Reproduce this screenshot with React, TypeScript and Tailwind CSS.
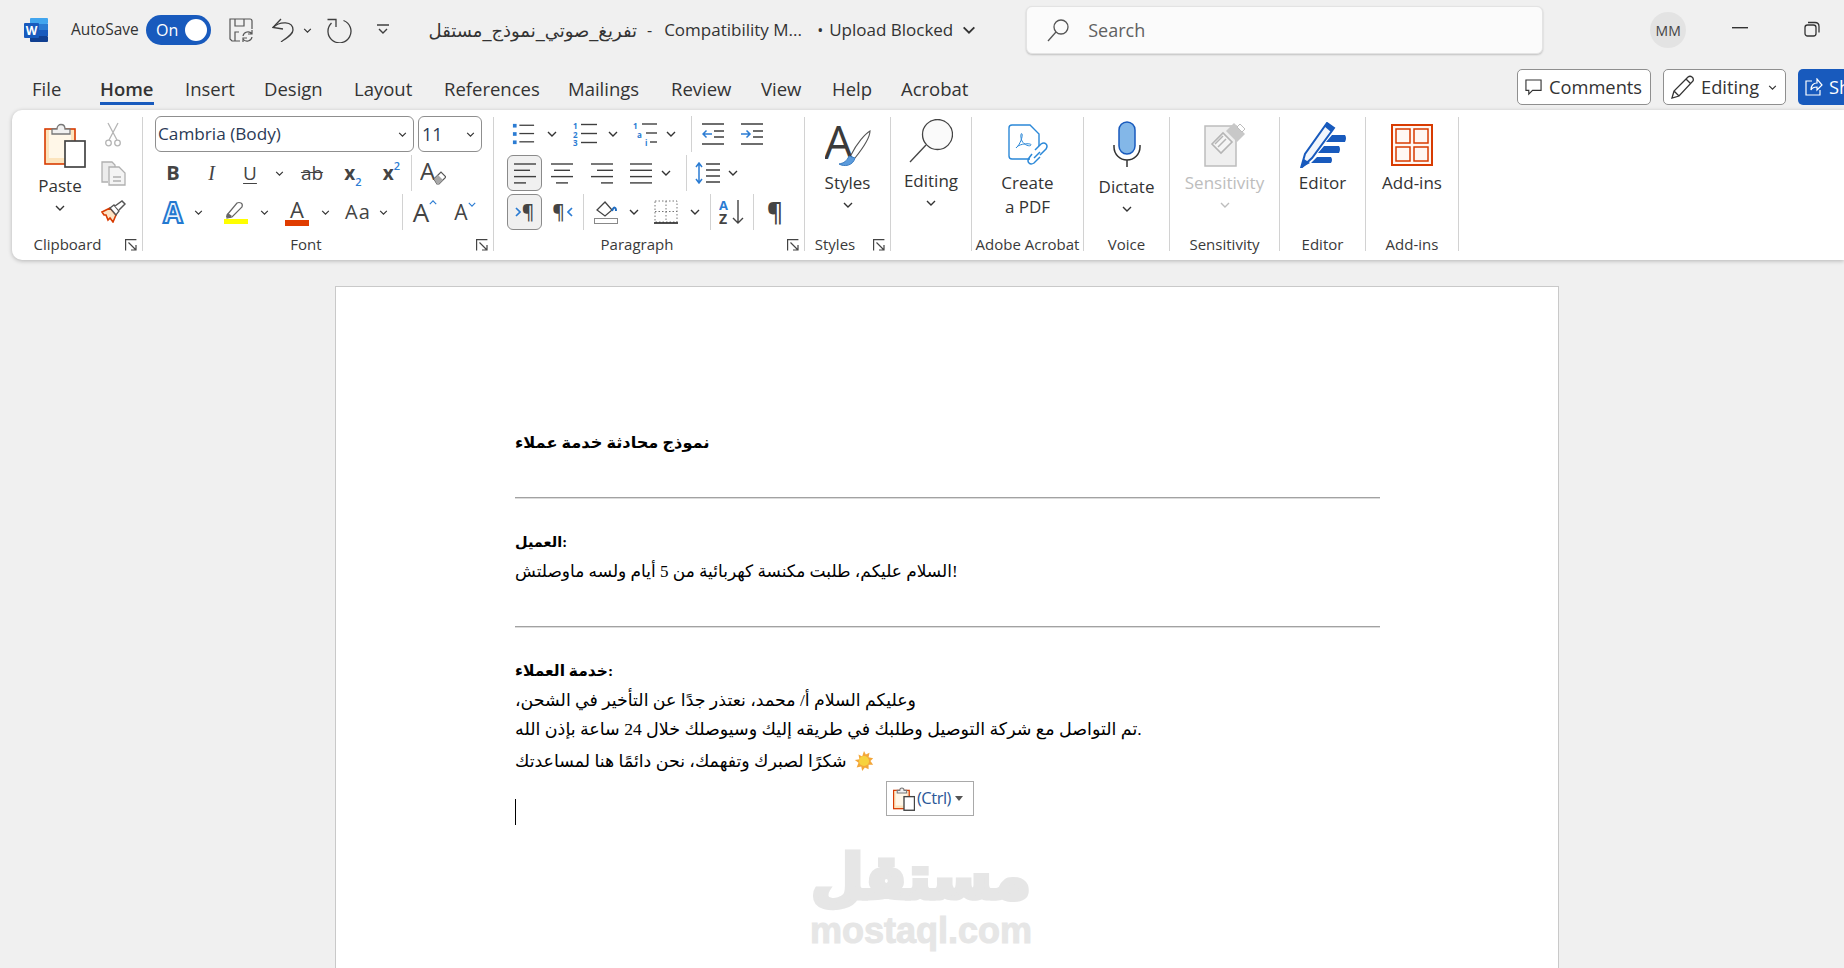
import type { ReactNode } from 'react'

const INK = '#3f3f3f'
const BLUE = '#2b7cd3'

function Chevron({ className = 'w-[10px] h-[6px]', color = '#333333' }: { className?: string; color?: string }) {
  return (
    <svg viewBox="0 0 10 6" className={className} fill="none">
      <path d="M1 1l4 4 4-4" stroke={color} strokeWidth="1.4" />
    </svg>
  )
}

function Launcher() {
  return (
    <svg viewBox="0 0 12 12" className="w-[12px] h-[12px]" fill="none" stroke="#444444" strokeWidth="1.2">
      <path d="M.6 11.5V.6h10.8M3.5 3.5l7 7M11 6v5H6" />
    </svg>
  )
}

function Cell({ className, children }: { className: string; children?: ReactNode }) {
  return <div className={`flex items-center justify-center shrink-0 h-full ${className}`}>{children}</div>
}

function Lines({ kind }: { kind: 'left' | 'center' | 'right' | 'justify' }) {
  const rows = {
    left: ['M0 1h22', 'M0 7.3h16', 'M0 13.6h22', 'M0 19.9h12'],
    center: ['M0 1h22', 'M3 7.3h16', 'M0 13.6h22', 'M5 19.9h12'],
    right: ['M0 1h22', 'M6 7.3h16', 'M0 13.6h22', 'M10 19.9h12'],
    justify: ['M0 1h22', 'M0 7.3h22', 'M0 13.6h22', 'M0 19.9h22'],
  }[kind]
  return (
    <svg viewBox="0 0 22 21" className="w-[22px] h-[21px]" fill="none" stroke={INK} strokeWidth="1.4">
      {rows.map(d => <path key={d} d={d} />)}
    </svg>
  )
}

function ListIcon({ kind }: { kind: 'bullet' | 'number' | 'multi' }) {
  return (
    <svg viewBox="0 0 25 24" className="w-[25px] h-[24px]" fill="none">
      {kind === 'bullet' && (
        <g fill={BLUE}>
          <rect x="1" y="1" width="4" height="4" />
          <rect x="1" y="10" width="4" height="4" />
          <rect x="1" y="19" width="4" height="4" />
        </g>
      )}
      {kind === 'number' && (
        <g fill={BLUE} fontFamily="Open Sans, sans-serif" fontSize="8" fontWeight="700">
          <text x="0" y="7">1</text>
          <text x="0" y="15.5">2</text>
          <text x="0" y="24">3</text>
        </g>
      )}
      {kind === 'multi' && (
        <g fill={BLUE} fontFamily="Open Sans, sans-serif" fontSize="8" fontWeight="700">
          <text x="0" y="7">1</text>
          <text x="4" y="15.5">a</text>
          <text x="12" y="24">i</text>
        </g>
      )}
      <g stroke={INK} strokeWidth="1.4">
        {kind === 'multi' ? (
          <>
            <path d="M9 2h15" />
            <path d="M13 11h11" />
            <path d="M17 20h7" />
          </>
        ) : (
          <>
            <path d="M8 2.500h16" />
            <path d="M8 11.500h16" />
            <path d="M8 20.500h16" />
          </>
        )}
      </g>
    </svg>
  )
}

function IndentIcon({ more }: { more?: boolean }) {
  return (
    <svg viewBox="0 0 22 24" className="w-[22px] h-[24px]" fill="none">
      <g stroke={INK} strokeWidth="1.4">
        <path d="M0 2h22M12 9h10M12 15h10M0 22h22" />
      </g>
      <path d={more ? 'M0 12h9M5.500 8.500L9 12l-3.500 3.500' : 'M10 12H1M4.500 8.500L1 12l3.500 3.500'} stroke={BLUE} strokeWidth="1.5" />
    </svg>
  )
}

function Pilcrow({ side }: { side?: 'ltr' | 'rtl' }) {
  return (
    <span className="flex items-center text-[19px] font-semibold leading-none text-[#444444]">
      {side === 'ltr' && <svg viewBox="0 0 6 10" className="w-[6px] h-[10px] mr-[1px]" fill="none"><path d="M1 1l4 4-4 4" stroke={BLUE} strokeWidth="1.7" /></svg>}
      ¶
      {side === 'rtl' && <svg viewBox="0 0 6 10" className="w-[6px] h-[10px] ml-[2px]" fill="none"><path d="M5 1L1 5l4 4" stroke={BLUE} strokeWidth="1.7" /></svg>}
    </span>
  )
}

function PasteIcon({ small }: { small?: boolean }) {
  return (
    <svg viewBox="0 0 42 45" className={small ? 'w-[22px] h-[24px]' : 'w-[42px] h-[45px]'} fill="none">
      <rect x="1" y="6" width="30" height="35" fill="#fce4bd" stroke="#d83b01" strokeWidth={small ? 2.4 : 1.6} />
      <path d="M5 7v28h22V7" fill="#fff7e8" />
      <path d="M8 11V6h5c0-6 8-6 8 0h5v5z" fill="#f0f0f0" stroke="#777777" strokeWidth={small ? 2 : 1.3} />
      <rect x="21" y="18" width="20" height="26" fill="#ffffff" stroke="#444444" strokeWidth={small ? 2.6 : 1.7} />
    </svg>
  )
}

function Group({ width, label, launcher, labelClass = 'pr-0', children }: { width: string; label: string; launcher?: boolean; labelClass?: string; children: ReactNode }) {
  return (
    <div className={`h-[134px] mt-[7px] border-r border-[#d2d2d2] shrink-0 flex flex-col ${width}`}>
      <div className="h-[116px] shrink-0">{children}</div>
      <div className={`relative h-[22px] shrink-0 flex items-center justify-center text-[15px] whitespace-nowrap text-[#3a3a3a] ${labelClass}`}>
        {label}
        {launcher && <span className="absolute right-[5px] top-[6px] flex"><Launcher /></span>}
      </div>
    </div>
  )
}

function BigButton({ icon, lines, chevron, dim, iconBox = 'h-[52px]', textBox = 'h-[28px]' }: { icon: ReactNode; lines: string[]; chevron?: boolean; dim?: boolean; iconBox?: string; textBox?: string }) {
  return (
    <div className={`flex flex-col items-center text-[17px] ${dim ? 'text-[#bdbdbd]' : 'text-[#333333]'}`}>
      <div className={`flex items-center justify-center pt-[3px] ${iconBox}`}>{icon}</div>
      {lines.map(t => <div key={t} className={`flex items-center ${textBox} whitespace-nowrap`}>{t}</div>)}
      {chevron && <div className="flex h-[16px] items-center"><Chevron color={dim ? '#bdbdbd' : '#333333'} /></div>}
    </div>
  )
}

function TitleBar() {
  return (
    <div className="h-[60px] shrink-0 flex items-center text-[#333333]">
      <svg viewBox="0 0 24 24" className="w-[24px] h-[24px] ml-[24px] -mt-[1px] shrink-0">
        <rect x="6" y="0" width="18" height="6" rx="1" fill="#41a5ee" />
        <rect x="6" y="6" width="18" height="6" fill="#2b7cd3" />
        <rect x="6" y="12" width="18" height="6" fill="#185abd" />
        <rect x="6" y="18" width="18" height="6" rx="1" fill="#103f91" />
        <rect x="0" y="5" width="15" height="15" rx="1" fill="#185abd" />
        <text x="7.500" y="16.500" textAnchor="middle" fontSize="12" fontWeight="700" fill="#ffffff" fontFamily="Open Sans, sans-serif">W</text>
      </svg>
      <span className="ml-[23px] w-[66px] text-[15.5px] whitespace-nowrap">AutoSave</span>
      <div className="ml-[9px] w-[65px] h-[30px] rounded-full bg-[#185abd] flex items-center text-white text-[16px] pl-[10px] shrink-0">
        <span>On</span>
        <span className="ml-auto mr-[4px] w-[22px] h-[22px] rounded-full bg-white" />
      </div>
      <svg viewBox="0 0 24 24" className="ml-[18px] w-[24px] h-[24px] shrink-0" fill="none" stroke="#555555" strokeWidth="1.2">
        <path d="M11 23H3l-2-2V1h20q2 0 2 2v8" />
        <path d="M6 1v7h9V1M6 23v-9h4" />
        <path d="M14 18a5 5 0 0 1 9-2M23 12v4h-4M23 19a5 5 0 0 1-9 2M14 24v-4h4" />
      </svg>
      <svg viewBox="0 0 22 24" className="ml-[19px] w-[22px] h-[24px] shrink-0" fill="none" stroke={INK} strokeWidth="1.3">
        <path d="M9 1L1 9.500l10 1.500" />
        <path d="M1 9.500C8 3 21 3 21 12c0 4-5 7-12 12" />
      </svg>
      <Cell className="ml-[8px] w-[10px]"><Chevron className="w-[9px] h-[5px]" /></Cell>
      <svg viewBox="0 0 25 25" className="ml-[15px] w-[25px] h-[25px] shrink-0" fill="none" stroke={INK} strokeWidth="1.3">
        <path d="M0.500 1.500H9V9" />
        <path d="M16.500 2.500A11.500 11.500 0 1 1 4.500 5" />
      </svg>
      <svg viewBox="0 0 12 12" className="ml-[25px] w-[12px] h-[12px] shrink-0" fill="none" stroke={INK} strokeWidth="1.4">
        <path d="M0 1h12M2 5l4 4 4-4" />
      </svg>
      <div className="ml-[38px] w-[210px] shrink-0 text-[18px] whitespace-nowrap font-['DejaVu_Sans',sans-serif]" dir="rtl">تفريغ_صوتي_نموذج_مستقل</div>
      <span className="ml-[10px] text-[16px]">-</span>
      <span className="ml-[12px] w-[141px] shrink-0 text-[17px] whitespace-nowrap">Compatibility M...</span>
      <span className="ml-[12px] text-[16px]">•</span>
      <span className="ml-[6px] w-[125px] shrink-0 text-[17px] whitespace-nowrap">Upload Blocked</span>
      <Cell className="ml-[7px] w-[15px]"><Chevron className="w-[14px] h-[8px]" /></Cell>
      <div className="ml-[50px] w-[517px] h-[48px] shrink-0 rounded-[6px] bg-[#fbfbfb] border border-[#e3e3e3] shadow-[0_1px_2px_rgba(0,0,0,0.2)] flex items-center">
        <svg viewBox="0 0 24 24" className="ml-[19px] w-[24px] h-[24px]" fill="none" stroke="#555555" strokeWidth="1.3">
          <circle cx="15" cy="9" r="7" />
          <path d="M10 14l-8 9" />
        </svg>
        <span className="ml-[18px] text-[18px] text-[#616161]">Search</span>
      </div>
      <div className="ml-[107px] w-[36px] h-[36px] shrink-0 rounded-full bg-[#e3e3e3] flex items-center justify-center text-[14px] text-[#444444]">MM</div>
      <svg viewBox="0 0 16 2" className="ml-[46px] w-[16px] h-[2px] -mt-[4px] shrink-0"><rect width="16" height="1.400" fill="#333333" /></svg>
      <svg viewBox="0 0 16 16" className="ml-[56px] w-[16px] h-[16px] -mt-[2px] shrink-0" fill="none" stroke="#333333" strokeWidth="1.3">
        <rect x="1" y="4" width="11" height="11" rx="2.500" />
        <path d="M4 1.500h7q4 0 4 4v6" />
      </svg>
    </div>
  )
}

function TabBar() {
  const tabs = [
    ['File', 'w-[100px] pl-[32px]'],
    ['Home', 'w-[85px] font-semibold'],
    ['Insert', 'w-[79px]'],
    ['Design', 'w-[90px]'],
    ['Layout', 'w-[90px]'],
    ['References', 'w-[124px]'],
    ['Mailings', 'w-[103px]'],
    ['Review', 'w-[90px]'],
    ['View', 'w-[71px]'],
    ['Help', 'w-[69px]'],
    ['Acrobat', 'w-[80px]'],
  ]
  return (
    <div className="h-[50px] shrink-0 flex items-start">
      {tabs.map(([name, cls]) => (
        <div key={name} className={`h-[45px] flex shrink-0 text-[18.5px] text-[#333333] ${cls}`}>
          <span className="relative h-[45px] flex items-center pt-[12px] whitespace-nowrap">
            {name}
            {name === 'Home' && <span className="absolute left-0 right-0 bottom-0 h-[3px] bg-[#185abd]" />}
          </span>
        </div>
      ))}
      <div className="ml-auto flex items-start pt-[9px] shrink-0">
        <div className="w-[134px] h-[36px] rounded-[5px] border border-[#8f8f8f] bg-white flex items-center pl-[7px] text-[18.3px] text-[#333333]">
          <svg viewBox="0 0 18 18" className="w-[17px] h-[17px]" fill="none" stroke="#333333" strokeWidth="1.2">
            <path d="M1 1h16v11H8l-4 4v-4H1z" />
          </svg>
          <span className="ml-[7px]">Comments</span>
        </div>
        <div className="ml-[12px] w-[123px] h-[36px] rounded-[5px] border border-[#8f8f8f] bg-white flex items-center pl-[7px] text-[18.3px] text-[#333333]">
          <svg viewBox="0 0 24 24" className="w-[24px] h-[24px]" fill="none" stroke="#333333" strokeWidth="1.3">
            <path d="M1 23l2-7L17 2q2-1.500 4 0t1 4L8 21zM15 4l5 5M3 16l5 5" />
          </svg>
          <span className="ml-[6px]">Editing</span>
          <Chevron className="ml-[9px] w-[9px] h-[5px]" />
        </div>
        <div className="ml-[12px] w-[46px] h-[36px] rounded-l-[5px] bg-[#185abd] flex items-center pl-[7px] text-[18.3px] text-white overflow-hidden">
          <svg viewBox="0 0 18 18" className="w-[18px] h-[18px] shrink-0" fill="none" stroke="#ffffff" strokeWidth="1.2">
            <path d="M7 3H1v14h14v-5M6 12c0-5 3-7 6-7V1l5 6-5 5V9c-3 0-5 1-6 3z" />
          </svg>
          <span className="ml-[6px]">Share</span>
        </div>
      </div>
    </div>
  )
}

function Ribbon() {
  return (
    <div className="ml-[12px] h-[150px] shrink-0 bg-white rounded-l-[10px] shadow-[0_1px_4px_rgba(0,0,0,0.25)] flex text-[#333333]">
      <Group width="w-[131px]" label="Clipboard" launcher labelClass="pr-[19px]">
        <div className="flex h-full">
          <div className="w-[86px] flex flex-col items-center pl-[10px]">
            <div className="pt-[6px] pl-[9px] h-[55px]"><PasteIcon /></div>
            <div className="h-[28px] flex items-center text-[17px]">Paste</div>
            <div className="h-[16px] flex items-center"><Chevron /></div>
          </div>
          <div className="w-[30px] flex flex-col items-center">
            <svg viewBox="0 0 16 25" className="mt-[5px] w-[16px] h-[25px]" fill="none" stroke="#b5b5b5" strokeWidth="1.3">
              <path d="M3 1l9 17M13 1L4 18" />
              <circle cx="3.500" cy="21" r="2.800" />
              <circle cx="12.500" cy="21" r="2.800" />
            </svg>
            <svg viewBox="0 0 25 25" className="mt-[14px] w-[25px] h-[25px]" fill="none" stroke="#b0b0b0" strokeWidth="1.3">
              <path d="M7 21H1V1h10l3 3v2" fill="#ececec" />
              <path d="M8 6h10l6 6v12H8z" fill="#f4f4f4" />
              <path d="M12 16h8M12 20h8" />
            </svg>
            <svg viewBox="0 0 25 23" className="mt-[14px] w-[25px] h-[23px]" fill="none">
              <path d="M1 12l8-4 6 7-3 7-3-4-2 2-2-5-2 0z" fill="#fbe3c5" stroke="#d83b01" strokeWidth="1.600" />
              <path d="M9 8l4-3 5 6-3 4z" fill="#ffffff" stroke="#555555" strokeWidth="1.300" />
              <path d="M14 6l7-5 3 3-6 6" fill="#ffffff" stroke="#555555" strokeWidth="1.500" />
            </svg>
          </div>
        </div>
      </Group>

      <Group width="w-[351px]" label="Font" launcher labelClass="pr-[24px]">
        <div className="flex -mt-[1px] h-[36px] pl-[12px]">
          <div className="w-[259px] h-[36px] rounded-[6px] border border-[#8f8f8f] flex items-center pl-[2px] pr-[6px] text-[17.2px] text-[#2b3a55]">
            Cambria (Body)<Chevron className="ml-auto w-[9px] h-[5px]" />
          </div>
          <div className="ml-[4px] w-[64px] h-[36px] rounded-[6px] border border-[#8f8f8f] flex items-center pl-[3px] pr-[6px] text-[18px] text-[#2b3a55]">
            11<Chevron className="ml-auto w-[9px] h-[5px]" />
          </div>
        </div>
        <div className="flex mt-[3px] h-[36px] pl-[12px] text-[#444444]">
          <Cell className="w-[36px] text-[20px] font-bold">B</Cell>
          <Cell className="w-[41px] text-[20px] italic font-['Liberation_Serif',serif]">I</Cell>
          <Cell className="w-[36px] text-[19px]"><span className="underline underline-offset-[3px]">U</span></Cell>
          <Cell className="w-[22px]"><Chevron className="w-[9px] h-[5px]" /></Cell>
          <Cell className="w-[44px] text-[19px]"><span className="line-through">ab</span></Cell>
          <Cell className="w-[38px] text-[19px] font-bold"><span className="flex items-end">x<span className="text-[11px] font-semibold text-[#2b7cd3] -mb-[3px]">2</span></span></Cell>
          <Cell className="w-[40px] text-[19px] font-bold border-r border-[#d2d2d2]"><span className="flex items-start">x<span className="text-[11px] font-semibold text-[#2b7cd3] -mt-[1px]">2</span></span></Cell>
          <Cell className="w-[42px]">
            <svg viewBox="0 0 26 24" className="w-[26px] h-[24px]" fill="none">
              <text x="0" y="19" fontSize="24" fontFamily="Open Sans, sans-serif" fill="#444444">A</text>
              <path d="M14 18l7-7 5 5-7 7h-2z" fill="#ffffff" stroke="#555555" strokeWidth="1.2" />
              <path d="M14 18l4-4 5 5-4 4h-2z" fill="#a8a8a8" />
            </svg>
          </Cell>
        </div>
        <div className="flex mt-[3px] h-[36px] pl-[12px] text-[#444444]">
          <Cell className="w-[36px]">
            <span className="text-[28px] font-bold leading-none text-[#eaf3fc] [-webkit-text-stroke:2px_#2379d0]">A</span>
          </Cell>
          <Cell className="w-[14px]"><Chevron className="w-[9px] h-[5px]" /></Cell>
          <Cell className="ml-[11px] w-[40px]">
            <svg viewBox="0 0 24 24" className="w-[24px] h-[24px]" fill="none">
              <path d="M3 15L13 3q2-1 4 0t1 4L8 17l-5 1z" fill="#ffffff" stroke="#666666" strokeWidth="1.2" />
              <path d="M2 17l2-4 4 3-2 2z" fill="#666666" />
              <rect x="0" y="19" width="24" height="5.500" fill="#ffff00" />
            </svg>
          </Cell>
          <Cell className="w-[16px]"><Chevron className="w-[9px] h-[5px]" /></Cell>
          <Cell className="ml-[8px] w-[34px]">
            <span className="flex flex-col items-center text-[22px] leading-[22px]">A<span className="w-[24px] h-[6px] bg-[#e03c00]" /></span>
          </Cell>
          <Cell className="w-[22px]"><Chevron className="w-[9px] h-[5px]" /></Cell>
          <Cell className="ml-[6px] w-[32px] text-[20px] tracking-[1px]">Aa</Cell>
          <Cell className="w-[18px]"><Chevron className="w-[9px] h-[5px]" /></Cell>
          <Cell className="w-[11px] border-r border-[#d2d2d2]" />
          <Cell className="w-[44px]">
            <span className="flex items-start text-[26px] leading-none">A<Chevron className="mt-[1px] w-[8px] h-[5px] rotate-180" color={BLUE} /></span>
          </Cell>
          <Cell className="w-[36px]">
            <span className="flex items-start text-[21px] leading-none">A<Chevron className="w-[8px] h-[5px]" color={BLUE} /></span>
          </Cell>
        </div>
      </Group>

      <Group width="w-[311px]" label="Paragraph" launcher labelClass="pr-[24px]">
        <div className="flex -mt-[1px] h-[36px] pl-[18px]">
          <Cell className="w-[23px]"><ListIcon kind="bullet" /></Cell>
          <Cell className="w-[34px]"><Chevron /></Cell>
          <Cell className="w-[32px]"><ListIcon kind="number" /></Cell>
          <Cell className="w-[24px]"><Chevron /></Cell>
          <Cell className="w-[40px]"><ListIcon kind="multi" /></Cell>
          <Cell className="w-[12px]"><Chevron /></Cell>
          <Cell className="w-[15px] border-r border-[#d2d2d2]" />
          <Cell className="w-[42px]"><IndentIcon /></Cell>
          <Cell className="w-[36px]"><IndentIcon more /></Cell>
        </div>
        <div className="flex mt-[3px] h-[36px] pl-[13px]">
          <Cell className="w-[35px] rounded-[6px] border border-[#8a8a8a] bg-[#f0f0f0]"><Lines kind="left" /></Cell>
          <Cell className="w-[40px]"><Lines kind="center" /></Cell>
          <Cell className="w-[40px]"><Lines kind="right" /></Cell>
          <Cell className="w-[38px]"><Lines kind="justify" /></Cell>
          <Cell className="w-[12px]"><Chevron /></Cell>
          <Cell className="w-[15px] border-r border-[#d2d2d2]" />
          <Cell className="w-[40px]">
            <svg viewBox="0 0 25 22" className="w-[25px] h-[22px]" fill="none">
              <path d="M4 1v20M1 5l3-4 3 4M1 17l3 4 3-4" stroke={BLUE} strokeWidth="1.500" />
              <path d="M11 2h14M11 8h14M11 14h14M11 20h14" stroke={INK} strokeWidth="1.400" />
            </svg>
          </Cell>
          <Cell className="w-[12px]"><Chevron /></Cell>
        </div>
        <div className="flex mt-[3px] h-[36px] pl-[13px]">
          <Cell className="w-[35px] rounded-[6px] border border-[#8a8a8a] bg-[#f0f0f0]"><Pilcrow side="ltr" /></Cell>
          <Cell className="w-[42px] border-r border-[#d2d2d2]"><Pilcrow side="rtl" /></Cell>
          <Cell className="w-[43px]">
            <svg viewBox="0 0 24 24" className="w-[24px] h-[24px]" fill="none">
              <path d="M3 10l8-8 7 8-7 6z" fill="#ffffff" stroke="#444444" strokeWidth="1.300" />
              <path d="M18 11c2-5 4-4 4 0" stroke="#1f6cc0" strokeWidth="2" />
              <rect x="0.500" y="18.500" width="23" height="5" fill="#ffffff" stroke="#888888" />
            </svg>
          </Cell>
          <Cell className="w-[14px]"><Chevron /></Cell>
          <Cell className="ml-[8px] w-[34px]">
            <svg viewBox="0 0 24 24" className="w-[24px] h-[24px]" fill="none">
              <path d="M1 1h22v21H1zM12 1v21M1 11.500h22" stroke="#777777" strokeDasharray="1.500 2" />
              <path d="M0 23h24" stroke="#222222" strokeWidth="1.600" />
            </svg>
          </Cell>
          <Cell className="w-[24px]"><Chevron /></Cell>
          <Cell className="w-[4px] border-r border-[#d2d2d2]" />
          <Cell className="w-[43px] border-r border-[#d2d2d2]">
            <svg viewBox="0 0 26 26" className="w-[26px] h-[26px]" fill="none">
              <text x="0" y="11" fontSize="13" fontWeight="700" fontFamily="Open Sans, sans-serif" fill={BLUE}>A</text>
              <text x="0" y="25" fontSize="14" fontWeight="700" fontFamily="Open Sans, sans-serif" fill="#444444">Z</text>
              <path d="M19 1v23M14 19l5 5 5-5" stroke="#444444" strokeWidth="1.400" />
            </svg>
          </Cell>
          <Cell className="w-[42px] text-[25px] font-semibold text-[#444444]">¶</Cell>
        </div>
      </Group>

      <Group width="w-[86px]" label="Styles" launcher labelClass="pr-[25px]">
        <BigButton
          lines={['Styles']}
          chevron
          icon={
            <svg viewBox="0 0 46 44" className="w-[46px] h-[44px]" fill="none">
              <text x="-1" y="36" fontSize="46" fontFamily="Open Sans, sans-serif" fill="#3a3a3a">A</text>
              <path d="M26 32C32 20 40 11 45 8c0 6-7 17-15 27" fill="#ffffff" stroke="#555555" strokeWidth="1.100" />
              <path d="M24 33c-2 5-5 7-10 8 5 3 14 2 16-6z" fill="#5b9bdc" stroke="#3b7cc0" strokeWidth="1" />
            </svg>
          }
        />
      </Group>

      <Group width="w-[81px]" label="">
        <BigButton
          lines={['Editing']}
          chevron
          iconBox="h-[50px] pb-[5px]"
          icon={
            <svg viewBox="0 0 44 44" className="w-[44px] h-[44px]" fill="none" stroke="#444444" strokeWidth="1.300">
              <circle cx="28.500" cy="15.500" r="15" fill="#fafafa" />
              <path d="M17 26L1 43" />
            </svg>
          }
        />
      </Group>

      <Group width="w-[112px]" label="Adobe Acrobat">
        <BigButton
          lines={['Create', 'a PDF']}
          textBox="h-[24px]"
          iconBox="h-[54px]"
          icon={
            <svg viewBox="0 0 40 44" className="w-[40px] h-[44px]" fill="none" stroke="#2b88d8" strokeWidth="1.400">
              <path d="M22 35H4q-3 0-3-3V4q0-3 3-3h18l9 9v12" />
              <path d="M8 24c4-3 7-12 6-14s-2 3 0 7 8 6 9 4-12-2-15 3z" strokeWidth="1" />
              <path d="M27 26l6-6q3-2 5 0t0 5l-6 6M24 30l-3 4q-2 3 0 5t5 0l6-6M26 34l6-6" strokeWidth="1.500" />
            </svg>
          }
        />
      </Group>

      <Group width="w-[86px]" label="Voice">
        <BigButton
          lines={['Dictate']}
          chevron
          iconBox="h-[56px] pb-[5px]"
          icon={
            <svg viewBox="0 0 28 46" className="w-[28px] h-[46px]" fill="none">
              <rect x="6" y="1" width="16" height="32" rx="8" fill="#83b7e8" stroke="#185abd" strokeWidth="1.500" />
              <path d="M1 24v2a13 13 0 0 0 26 0v-2M14 39v7" stroke="#333333" strokeWidth="1.500" />
            </svg>
          }
        />
      </Group>

      <Group width="w-[110px]" label="Sensitivity">
        <BigButton
          lines={['Sensitivity']}
          chevron
          dim
          icon={
            <svg viewBox="0 0 42 45" className="w-[42px] h-[45px]" fill="none">
              <rect x="1" y="4" width="31" height="40" fill="#efefef" stroke="#bdbdbd" strokeWidth="1.500" />
              <path d="M8 22l11-11 9 9-11 11z" fill="#f5f5f5" stroke="#b5b5b5" strokeWidth="1.600" />
              <path d="M11 22l8-8M14 25l8-8" stroke="#b5b5b5" strokeWidth="1.500" />
              <path d="M22 9l8-8 11 11-8 8z" fill="#c8c8c8" />
              <path d="M33 5l3-3 5 5-3 3z" fill="#ffffff" stroke="#bdbdbd" />
            </svg>
          }
        />
      </Group>

      <Group width="w-[86px]" label="Editor">
        <BigButton
          lines={['Editor']}
          icon={
            <svg viewBox="0 0 46 46" className="w-[46px] h-[46px]" fill="none">
              <path d="M1 46l4-14L27 1l7 5-22 30z" fill="#f2f6fc" stroke="#185abd" strokeWidth="2" />
              <path d="M24 4l3-3 7 5-3 4z" fill="#185abd" />
              <path d="M1 46l3-9 6 4z" fill="#185abd" />
              <path d="M32 13h13q2 3 0 7H26zM24 24h15q2 3 0 7H18zM17 35h14q2 3 0 6H11z" fill="#185abd" />
            </svg>
          }
        />
      </Group>

      <Group width="w-[93px]" label="Add-ins">
        <BigButton
          lines={['Add-ins']}
          icon={
            <svg viewBox="0 0 42 42" className="w-[42px] h-[42px]" fill="#fff7f3" stroke="#d83b01" strokeWidth="1.500">
              <rect x="1" y="1" width="40" height="40" strokeWidth="2" />
              <rect x="5" y="5" width="14" height="14" />
              <rect x="23" y="5" width="14" height="14" />
              <rect x="5" y="23" width="14" height="14" />
              <rect x="23" y="23" width="14" height="14" />
            </svg>
          }
        />
      </Group>
    </div>
  )
}

function DocLine({ className, children }: { className: string; children: ReactNode }) {
  return <div className={`flex items-center whitespace-nowrap ${className}`}>{children}</div>
}

function Rule({ className }: { className: string }) {
  return <div className={`w-[865px] h-[2px] bg-[#a2a2a2] border-b border-[#dcdcdc] ${className}`} />
}

function Page() {
  return (
    <div className="relative flex-1 ml-[335px] w-[1224px] mt-[26px] bg-white border border-b-0 border-[#c9c9c9] pt-[141px] pl-[179px] text-black font-['Liberation_Serif','DejaVu_Sans',serif] overflow-hidden">
      <DocLine className="h-[30px] text-[16.2px] font-bold"><span dir="rtl">نموذج محادثة خدمة عملاء</span></DocLine>
      <Rule className="mt-[39px]" />
      <DocLine className="mt-[30px] h-[28px] text-[14.5px] font-bold">العميل:</DocLine>
      <DocLine className="mt-[1px] h-[28px] text-[17px]">السلام عليكم، طلبت مكنسة كهربائية من 5 أيام ولسه ماوصلتش!</DocLine>
      <Rule className="mt-[40px]" />
      <DocLine className="mt-[29px] h-[28px] text-[15.5px] font-bold">خدمة العملاء:</DocLine>
      <DocLine className="mt-[1px] h-[28px] text-[17.4px]"><span dir="rtl">وعليكم السلام أ/ محمد، نعتذر جدًا عن التأخير في الشحن،</span></DocLine>
      <DocLine className="mt-[1px] h-[28px] text-[17.5px]">تم التواصل مع شركة التوصيل وطلبك في طريقه إليك وسيوصلك خلال 24 ساعة بإذن الله.</DocLine>
      <DocLine className="mt-[4px] h-[28px] text-[17.4px]">
        شكرًا لصبرك وتفهمك، نحن دائمًا هنا لمساعدتك
        <svg viewBox="0 0 24 24" className="ml-[6px] w-[22px] h-[22px]">
          <path d="M12 1l2 4 4-2-1 5 5 1-3 3 3 4-5 0 0 5-4-2-3 4-1-5-5 1 2-5-4-3 5-1-1-5 4 2z" fill="#f3a73a" />
          <circle cx="12" cy="12" r="5.500" fill="#f7d23e" />
        </svg>
      </DocLine>
      <div className="mt-[24px] w-[1px] h-[26px] bg-black" />

      <div className="absolute left-[550px] top-[494px] w-[88px] h-[35px] border border-[#a9a9a9] bg-white flex items-center pl-[6px] text-[16.5px] text-[#2b5797] font-['Open_Sans',sans-serif]">
        <PasteIcon small />
        <span className="ml-[2px] tracking-[-0.5px]">(Ctrl)</span>
        <span className="ml-[4px] w-0 h-0 border-x-[4px] border-x-transparent border-t-[5px] border-t-[#555555]" />
      </div>

      <div className="absolute left-[474px] top-[556px] w-[222px] flex flex-col items-center text-[#e6e6e6] font-['DejaVu_Sans',sans-serif] font-bold">
        <span className="text-[60px] leading-[68px] whitespace-nowrap [-webkit-text-stroke:5px_#e6e6e6]">مستقل</span>
        <span className="text-[36px] leading-[40px] font-['Liberation_Sans',sans-serif] [-webkit-text-stroke:1px_#e6e6e6]">mostaql.com</span>
      </div>
    </div>
  )
}

export default function App() {
  return (
    <div className="w-[1844px] h-[968px] overflow-hidden bg-[#f0f0f0] flex flex-col font-['Open_Sans',sans-serif]">
      <TitleBar />
      <TabBar />
      <Ribbon />
      <Page />
    </div>
  )
}
